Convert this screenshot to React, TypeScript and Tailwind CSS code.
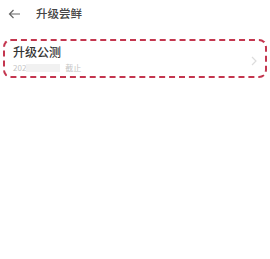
export default function App() {
  return (
    <div
      className="w-[270px] h-[259px] bg-white text-[#333]"
      style={{ fontFamily: '"Noto Sans CJK SC", "Noto Sans", sans-serif' }}
    >
      <div className="flex items-center h-[27px] pl-[8px]">
        <svg width="13" height="10" viewBox="0 0 13 10" className="text-[#666]">
          <path d="M12 5H1.5M5.5 1L1.5 5l4 4" fill="none" stroke="currentColor" strokeWidth="1.2" />
        </svg>
        <span className="ml-[15px] text-[11.5px] leading-none font-medium text-[#444]">升级尝鲜</span>
      </div>
      <div className="mt-[12px] mx-[3px] h-[39px] rounded-[8px] border-2 border-dashed border-[#c4364f] flex items-center pl-[8px] pr-[8px]">
        <div className="flex-1 flex flex-col">
          <span className="text-[12px] leading-none font-medium text-[#333]">升级公测</span>
          <span className="mt-[6px] flex items-center text-[8px] leading-none text-[#c4c4c4]">
            202
            <span className="inline-block w-[34px] h-[8px] bg-[#f1f1f1]" />
            <span className="ml-[5px]">截止</span>
          </span>
        </div>
        <svg width="6" height="10" viewBox="0 0 6 10" className="mt-[4px]">
          <path d="M1 1l4 4-4 4" fill="none" stroke="#dcdcdc" strokeWidth="1.2" />
        </svg>
      </div>
    </div>
  );
}
